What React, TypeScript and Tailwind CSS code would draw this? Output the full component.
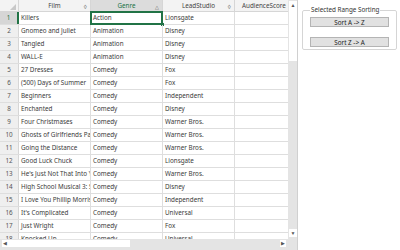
import React from 'react'

const rows: [string, string, string][] = [
  ['Killers', 'Action', 'Lionsgate'],
  ['Gnomeo and Juliet', 'Animation', 'Disney'],
  ['Tangled', 'Animation', 'Disney'],
  ['WALL-E', 'Animation', 'Disney'],
  ['27 Dresses', 'Comedy', 'Fox'],
  ['(500) Days of Summer', 'Comedy', 'Fox'],
  ['Beginners', 'Comedy', 'Independent'],
  ['Enchanted', 'Comedy', 'Disney'],
  ['Four Christmases', 'Comedy', 'Warner Bros.'],
  ['Ghosts of Girlfriends Past', 'Comedy', 'Warner Bros.'],
  ['Going the Distance', 'Comedy', 'Warner Bros.'],
  ['Good Luck Chuck', 'Comedy', 'Lionsgate'],
  ["He's Just Not That Into You", 'Comedy', 'Warner Bros.'],
  ['High School Musical 3: Senior Year', 'Comedy', 'Disney'],
  ['I Love You Phillip Morris', 'Comedy', 'Independent'],
  ["It's Complicated", 'Comedy', 'Universal'],
  ['Just Wright', 'Comedy', 'Fox'],
  ['Knocked Up', 'Comedy', 'Universal'],
]

const font = { fontFamily: '"Noto Sans", "Open Sans", sans-serif' }

function SortIcon({ dir }: { dir?: 'up' }) {
  if (dir === 'up') return <span className="text-[5px] leading-none text-[#555]">&#9651;</span>
  return <span className="text-[6px] leading-none text-[#666]">&#9674;</span>
}

function HeaderCell({ label, width, selected, dir }: { label: string; width: string; selected?: boolean; dir?: 'up' }) {
  return (
    <div
      className={`${width} relative flex h-full shrink-0 items-center justify-center border-r border-[#d6d6d6] ${
        selected ? 'bg-[#dcdcdc] text-[#217346]' : 'text-[#444]'
      }`}
    >
      <span className="whitespace-nowrap">{label}</span>
      <span className="absolute right-[3px] top-[2px]">
        <SortIcon dir={dir} />
      </span>
    </div>
  )
}

export default function App() {
  return (
    <div className="flex h-[250px] w-[400px] overflow-hidden bg-white text-[6.3px]" style={font}>
      {/* grid */}
      <div className="flex h-full w-[298px] shrink-0 flex-col border-r border-[#d0d0d0] bg-[#e4e4e4]">
        <div className="flex h-[239px] shrink-0">
          <div className="flex w-[288px] shrink-0 flex-col overflow-hidden bg-white">
            {/* header */}
            <div className="flex h-[12px] shrink-0 border-b border-[#d6d6d6] bg-[#f3f3f3]">
              <div className="relative h-full w-[19px] shrink-0 border-r border-[#d6d6d6]">
                <span className="absolute bottom-[1px] right-[2px] h-0 w-0 border-b-[6px] border-l-[6px] border-b-[#c8c8c8] border-l-transparent" />
              </div>
              <HeaderCell label="Film" width="w-[72px]" />
              <HeaderCell label="Genre" width="w-[72px]" selected dir="up" />
              <HeaderCell label="LeadStudio" width="w-[72px]" />
              <div className="flex h-full w-[53px] shrink-0 items-center overflow-hidden pl-[7px] text-[#444]">
                <span className="whitespace-nowrap">AudienceScore</span>
              </div>
            </div>
            {/* rows */}
            {rows.map((r, i) => (
              <div key={i} className="flex h-[13px] shrink-0 border-b border-[#dedede] text-[#3a3a3a]">
                <div
                  className={`flex h-full w-[19px] shrink-0 items-center justify-center border-r ${
                    i === 0 ? 'border-r-2 border-[#217346] bg-[#d6d6d6] text-[#217346]' : 'border-[#d6d6d6] bg-[#efefef] text-[#555]'
                  }`}
                >
                  {i + 1}
                </div>
                <div className="flex h-full w-[72px] shrink-0 items-center overflow-hidden border-r border-[#dedede] pl-[2px]">
                  <span className="whitespace-nowrap">{r[0]}</span>
                </div>
                <div className="relative flex h-full w-[72px] shrink-0 items-center overflow-visible border-r border-[#dedede] pl-[2px]">
                  <span className="whitespace-nowrap">{r[1]}</span>
                  {i === 0 && (
                    <>
                      <span className="absolute -top-[1px] -left-[1px] h-[14px] w-[73px] border-2 border-[#217346]" />
                      <span className="absolute -bottom-[2px] -right-[2px] h-[3px] w-[3px] bg-[#217346]" />
                    </>
                  )}
                </div>
                <div className="flex h-full w-[72px] shrink-0 items-center overflow-hidden border-r border-[#dedede] pl-[2px]">
                  <span className="whitespace-nowrap">{r[2]}</span>
                </div>
                <div className="h-full w-[53px] shrink-0" />
              </div>
            ))}
          </div>
          {/* vertical scrollbar */}
          <div className="flex w-[10px] shrink-0 flex-col justify-between py-[1px] pl-[1px] pr-[1px]">
            <div className="flex h-[60px] flex-col items-center bg-white pt-[2px]">
              <span className="text-[5px] leading-none text-[#555]">&#9650;</span>
            </div>
            <div className="mb-[1px] flex h-[8px] items-center justify-center bg-white">
              <span className="text-[5px] leading-none text-[#555]">&#9660;</span>
            </div>
          </div>
        </div>
        {/* horizontal scrollbar */}
        <div className="flex h-[9px] w-[288px] shrink-0 items-center justify-between pl-[2px] pr-[2px]">
          <div className="flex h-[7px] w-[128px] items-center bg-white pl-[1px]">
            <span className="text-[5px] leading-none text-[#555]">&#9664;</span>
          </div>
          <div className="flex h-[7px] w-[6px] items-center justify-center bg-white">
            <span className="text-[5px] leading-none text-[#555]">&#9654;</span>
          </div>
        </div>
      </div>
      {/* right panel */}
      <div className="flex-1 pl-[4px] pr-[3px] pt-[7px]">
        <fieldset className="h-[43px] rounded-[2px] border border-[#d5d5d5] px-[7px] pt-0">
          <legend className="px-[1px] text-[6.3px] leading-none text-[#333]">Selected Range Sorting</legend>
          <div className="flex flex-col gap-[10px] pt-[4px]">
            <div className="flex h-[10px] items-center justify-center border border-[#b4b4b4] bg-[#e1e1e1] text-[#222]">
              Sort A -&gt; Z
            </div>
            <div className="flex h-[10px] items-center justify-center border border-[#b4b4b4] bg-[#e1e1e1] text-[#222]">
              Sort Z -&gt; A
            </div>
          </div>
        </fieldset>
      </div>
    </div>
  )
}
